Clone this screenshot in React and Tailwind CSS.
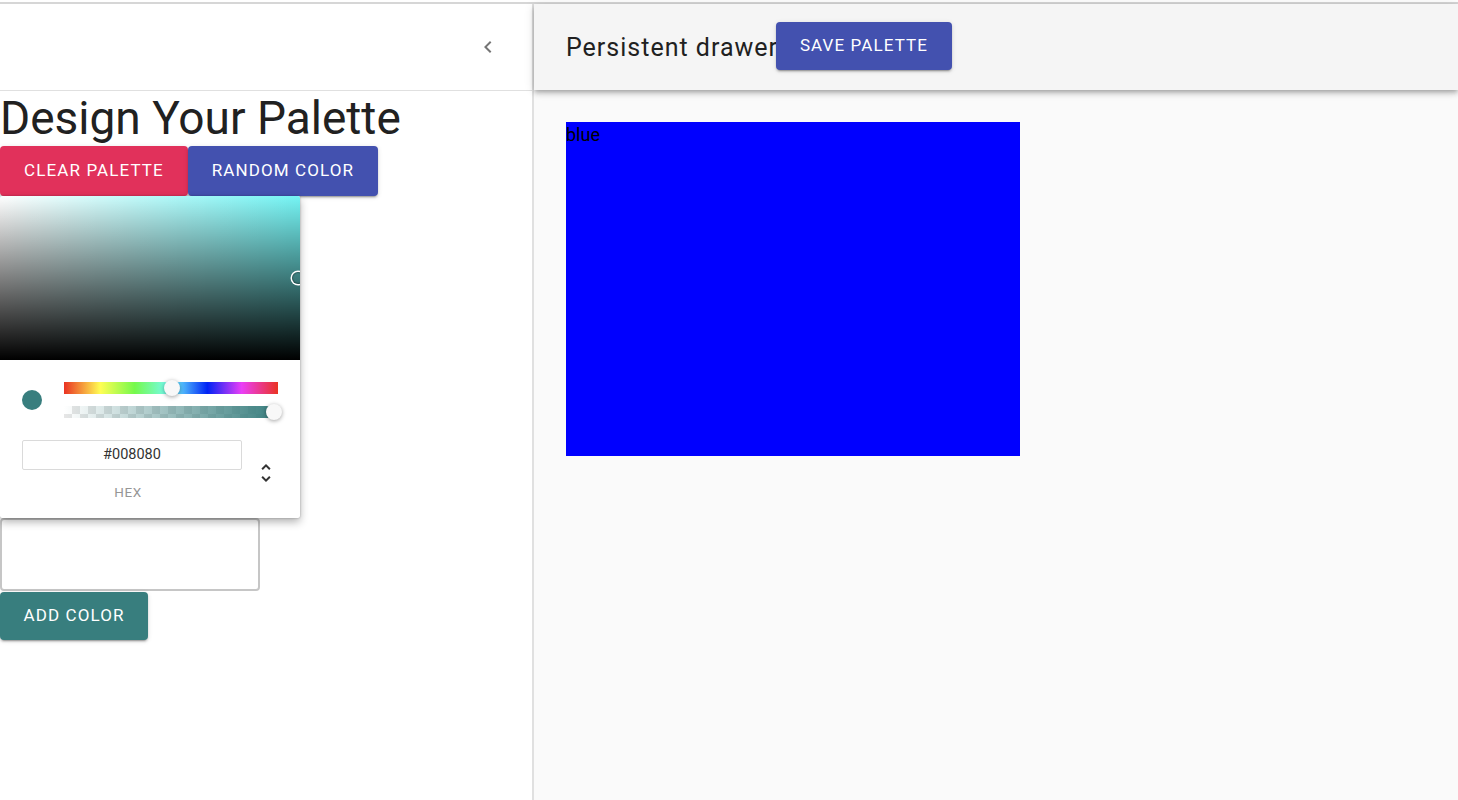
import React from "react";

const btnShadow =
  "shadow-[0px_3px_1px_-2px_rgba(0,0,0,0.2),0px_2px_2px_0px_rgba(0,0,0,0.14),0px_1px_5px_0px_rgba(0,0,0,0.12)]";

function ColorPicker() {
  return (
    <div className="relative z-10 w-[300px] rounded-[2px] bg-white shadow-[0px_0px_2px_rgba(0,0,0,0.3),0px_4px_8px_rgba(0,0,0,0.3)]">
      <div className="relative h-[164px] w-[300px] overflow-hidden rounded-t-[2px] bg-[#74f4f4]">
        <div className="absolute inset-0 bg-[linear-gradient(to_right,#fff,rgba(255,255,255,0))]" />
        <div className="absolute inset-0 bg-[linear-gradient(to_top,#000,rgba(0,0,0,0))]" />
        <div className="absolute left-[292px] top-[76px] h-[12px] w-[12px] rounded-full shadow-[0_0_0_1.5px_#fff,inset_0_0_1px_1px_rgba(0,0,0,0.3)]" />
      </div>
      <div className="px-[22px] pb-[19px] pt-[22px]">
        <div className="flex h-[36px] items-center">
          <div className="w-[42px]">
            <div className="h-[20px] w-[20px] rounded-full bg-[#387e7e]" />
          </div>
          <div className="flex flex-1 flex-col gap-[12px]">
            <div className="relative h-[12px] bg-[linear-gradient(to_right,#ea3323_0%,#fffe54_17%,#75f94c_33%,#74fbfd_50%,#0023f5_67%,#ea3ff7_83%,#ea3323_100%)]">
              <div className="absolute left-[100px] top-[-2px] h-[16px] w-[16px] rounded-full bg-[#f8f8f8] shadow-[0_1px_4px_0_rgba(0,0,0,0.37)]" />
            </div>
            <div className="relative h-[12px]">
              <div className="absolute inset-0 bg-[repeating-conic-gradient(#e6e6e6_0_25%,#fff_0_50%)] bg-[length:16px_16px]" />
              <div className="absolute inset-0 bg-[linear-gradient(to_right,rgba(56,126,126,0),#387e7e)]" />
              <div className="absolute left-[202px] top-[-2px] h-[16px] w-[16px] rounded-full bg-[#f8f8f8] shadow-[0_1px_4px_0_rgba(0,0,0,0.37)]" />
            </div>
          </div>
        </div>
        <div className="mt-[22px] flex">
          <div className="flex w-[220px] flex-col items-center">
            <div className="flex h-[30px] w-[220px] items-center justify-center rounded-[2px] border border-[#dadada] text-[14.5px] text-[#333]">
              #008080
            </div>
            <div className="mt-[15px] pr-[8px] text-[13.5px] leading-[14px] uppercase tracking-[0.04em] text-[#969696]">hex</div>
          </div>
          <div className="ml-[12px] mt-[21px]">
            <svg viewBox="0 0 24 24" width="24" height="24" className="text-[#333]">
              <path fill="currentColor" d="M12,5.83L15.17,9L16.58,7.59L12,3L7.41,7.59L8.83,9L12,5.83Z" />
              <path fill="currentColor" d="M12,18.17L8.83,15L7.42,16.41L12,21L16.59,16.41L15.17,15L12,18.17Z" />
            </svg>
          </div>
        </div>
      </div>
    </div>
  );
}

const btnText = "text-[17px] uppercase tracking-[0.065em] text-white";

export default function App() {
  return (
    <div className="h-[800px] w-[1458px] overflow-hidden bg-white font-['Roboto',sans-serif] text-[#212121]">
      <div className="h-[2px] bg-white" />
      <div className="h-[2px] bg-[#d6d6d6]" />
      <div className="flex h-[796px]">
        <aside className="flex w-[534px] flex-col border-r-2 border-[#e0e0e0] bg-white">
          <div className="flex h-[87px] items-center justify-end border-b border-[#e0e0e0] pr-[20px]">
            <div className="flex h-[48px] w-[48px] items-center justify-center">
              <svg viewBox="0 0 24 24" width="24" height="24">
                <path fill="rgba(0,0,0,0.54)" d="M15.41 7.41 14 6l-6 6 6 6 1.41-1.41L10.83 12z" />
              </svg>
            </div>
          </div>
          <h1 className="text-[46px] font-normal leading-[55px] text-[#212121]">Design Your Palette</h1>
          <div className="flex">
            <button className={`flex h-[50px] w-[188px] items-center justify-center rounded-[4px] bg-[#e1315b] ${btnText} ${btnShadow}`}>
              Clear Palette
            </button>
            <button className={`flex h-[50px] w-[190px] items-center justify-center rounded-[4px] bg-[#4351af] ${btnText} ${btnShadow}`}>
              Random Color
            </button>
          </div>
          <ColorPicker />
          <div className="h-[73px] w-[260px] rounded-[4px] border-2 border-[#c6c6c6] bg-white" />
          <button className={`mt-px flex h-[48px] w-[148px] items-center justify-center rounded-[4px] bg-[#387e7e] ${btnText} ${btnShadow}`}>
            Add Color
          </button>
        </aside>
        <main className="flex flex-1 flex-col bg-[#fafafa]">
          <header className="relative z-10 flex h-[86px] items-start bg-[#f5f5f5] pl-[32px] shadow-[0px_2px_4px_-1px_rgba(0,0,0,0.2),0px_4px_5px_0px_rgba(0,0,0,0.14),0px_1px_10px_0px_rgba(0,0,0,0.12)]">
            <span className="mt-[28px] w-[210px] whitespace-nowrap text-[25px] leading-[32px] tracking-[0.04em] text-[#212121]">
              Persistent drawer
            </span>
            <button className={`relative mt-[18px] flex h-[48px] w-[176px] items-center justify-center rounded-[4px] bg-[#4351af] ${btnText} ${btnShadow}`}>
              Save Palette
            </button>
          </header>
          <div className="p-[32px]">
            <div className="h-[334px] w-[454px] bg-[#0000ff] text-[18px] leading-[26px] text-black">blue</div>
          </div>
        </main>
      </div>
    </div>
  );
}
